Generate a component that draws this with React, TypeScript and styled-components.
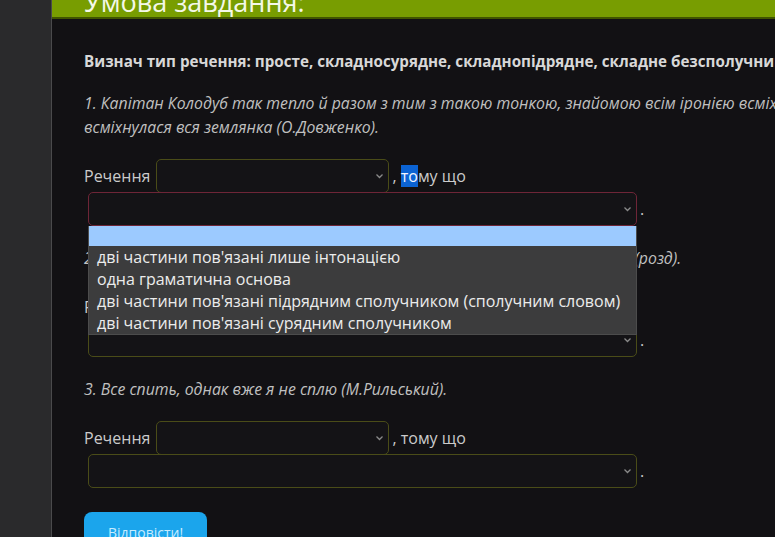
import styled, { createGlobalStyle } from "styled-components";

const GlobalStyle = createGlobalStyle`
  html, body {
    margin: 0;
    padding: 0;
    height: 100%;
    overflow: hidden;
    background: #121114;
  }
  body {
    font-family: "Open Sans", "Noto Sans", sans-serif;
  }
`;

const options = [
  "дві частини пов'язані лише інтонацією",
  "одна граматична основа",
  "дві частини пов'язані підрядним сполучником (сполучним словом)",
  "дві частини пов'язані сурядним сполучником",
];

const Page = styled.div`
  display: flex;
  width: 775px;
  height: 537px;
  overflow: hidden;
`;

const Sidebar = styled.div`
  flex: 0 0 51px;
  background: #2a2a2c;
  border-right: 1px solid #4a4a4c;
`;

const Main = styled.div`
  flex: 0 0 860px;
  background: #121114;
`;

const Header = styled.div`
  height: 17px;
  background: #789d01;
  border-bottom: 2px solid #405400;
  overflow: hidden;
  padding-left: 32px;
`;

const HeaderTitle = styled.h2`
  margin: -11px 0 0;
  font-size: 27px;
  line-height: 26px;
  font-weight: 400;
  color: #f4f8e8;
`;

const Content = styled.div`
  padding: 30px 0 0 32px;
`;

const TaskText = styled.p`
  margin: 0 0 18px;
  font-size: 15.2px;
  font-weight: 700;
  line-height: 24px;
  color: #d8d8d8;
  white-space: nowrap;
`;

const Sentence = styled.p`
  margin: 0 0 20px;
  font-size: 15.8px;
  font-style: italic;
  line-height: 24px;
  color: #c0c0c0;
  width: 770px;
`;

const Item = styled.div`
  margin-bottom: 21px;
`;

const Row = styled.div`
  display: flex;
  align-items: center;
  height: 33px;
  font-size: 16px;
  color: #cbcbcb;
`;

const Label = styled.span`
  margin-right: 6px;
`;

const Tail = styled.span`
  margin-left: 3px;
`;

const Selected = styled.span`
  background: #0b63d3;
  color: #f2f6ff;
`;

const SelectWrap = styled.div<{ $wide?: boolean }>`
  position: relative;
  margin-left: ${({ $wide }) => ($wide ? "4px" : "0")};
`;

const SelectBox = styled.div<{ $wide?: boolean; $focused?: boolean }>`
  box-sizing: border-box;
  width: ${({ $wide }) => ($wide ? "549px" : "233px")};
  height: 34px;
  border: 1px solid ${({ $focused }) => ($focused ? "#6e2537" : "#4a4c18")};
  border-radius: 5px;
  background: #141316;
  display: flex;
  align-items: center;
  justify-content: flex-end;
  padding-right: 4px;
`;

const Menu = styled.ul`
  position: absolute;
  top: 100%;
  left: 0;
  right: 0;
  margin: 0;
  padding: 0;
  list-style: none;
  background: #3c3c3d;
  border: 1px solid #4c4c4c;
  border-top: none;
  z-index: 5;
`;

const Option = styled.li<{ $active?: boolean }>`
  height: ${({ $active }) => ($active ? "20px" : "22px")};
  line-height: 22px;
  padding-left: 8px;
  font-size: 16px;
  color: #ececec;
  background: ${({ $active }) => ($active ? "#9ccaff" : "transparent")};
  white-space: nowrap;
`;

const Dot = styled.span`
  margin-left: 3px;
`;

const Button = styled.button`
  margin-top: 4px;
  height: 40px;
  padding: 0 24px;
  border: none;
  border-radius: 8px;
  background: #1ba5ec;
  color: #c8ecff;
  font-family: "Open Sans", "Noto Sans", sans-serif;
  font-size: 14px;
`;

const Chevron = () => (
  <svg width="9" height="6" viewBox="0 0 9 6">
    <polyline
      points="1.5,1.5 4.5,4.5 7.5,1.5"
      fill="none"
      stroke="#8a8a8a"
      strokeWidth="1.3"
    />
  </svg>
);

type SelectProps = { wide?: boolean; focused?: boolean; open?: boolean };

const Select = ({ wide, focused, open }: SelectProps) => (
  <SelectWrap $wide={wide}>
    <SelectBox $wide={wide} $focused={focused}>
      <Chevron />
    </SelectBox>
    {open && (
      <Menu>
        <Option $active />
        {options.map((o) => (
          <Option key={o}>{o}</Option>
        ))}
      </Menu>
    )}
  </SelectWrap>
);

type AnswerProps = { open?: boolean; highlight?: boolean };

const Answer = ({ open, highlight }: AnswerProps) => (
  <Item>
    <Row>
      <Label>Речення</Label>
      <Select />
      <Tail>
        ,{" "}
        {highlight ? (
          <>
            <Selected>то</Selected>му що
          </>
        ) : (
          "тому що"
        )}
      </Tail>
    </Row>
    <Row>
      <Select wide focused={open} open={open} />
      <Dot>.</Dot>
    </Row>
  </Item>
);

export default function App() {
  return (
    <>
      <GlobalStyle />
      <Page>
        <Sidebar />
        <Main>
          <Header>
            <HeaderTitle>Умова завдання:</HeaderTitle>
          </Header>
          <Content>
            <TaskText>
              Визнач тип речення: просте, складносурядне, складнопідрядне,
              складне безсполучникове.
            </TaskText>
            <Sentence>
              1. Капітан Колодуб так тепло й разом з тим з такою тонкою,
              знайомою всім іронією всміхнувся, що
              <br />
              всміхнулася вся землянка (О.Довженко).
            </Sentence>
            <Answer open highlight />
            <Sentence>
              2. Дівчина заспівала, і пісня полинула знов над тихими
              вечірніми полями (розд).
            </Sentence>
            <Answer />
            <Sentence>3. Все спить, однак вже я не сплю (М.Рильський).</Sentence>
            <Answer />
            <Button>Відповісти!</Button>
          </Content>
        </Main>
      </Page>
    </>
  );
}
